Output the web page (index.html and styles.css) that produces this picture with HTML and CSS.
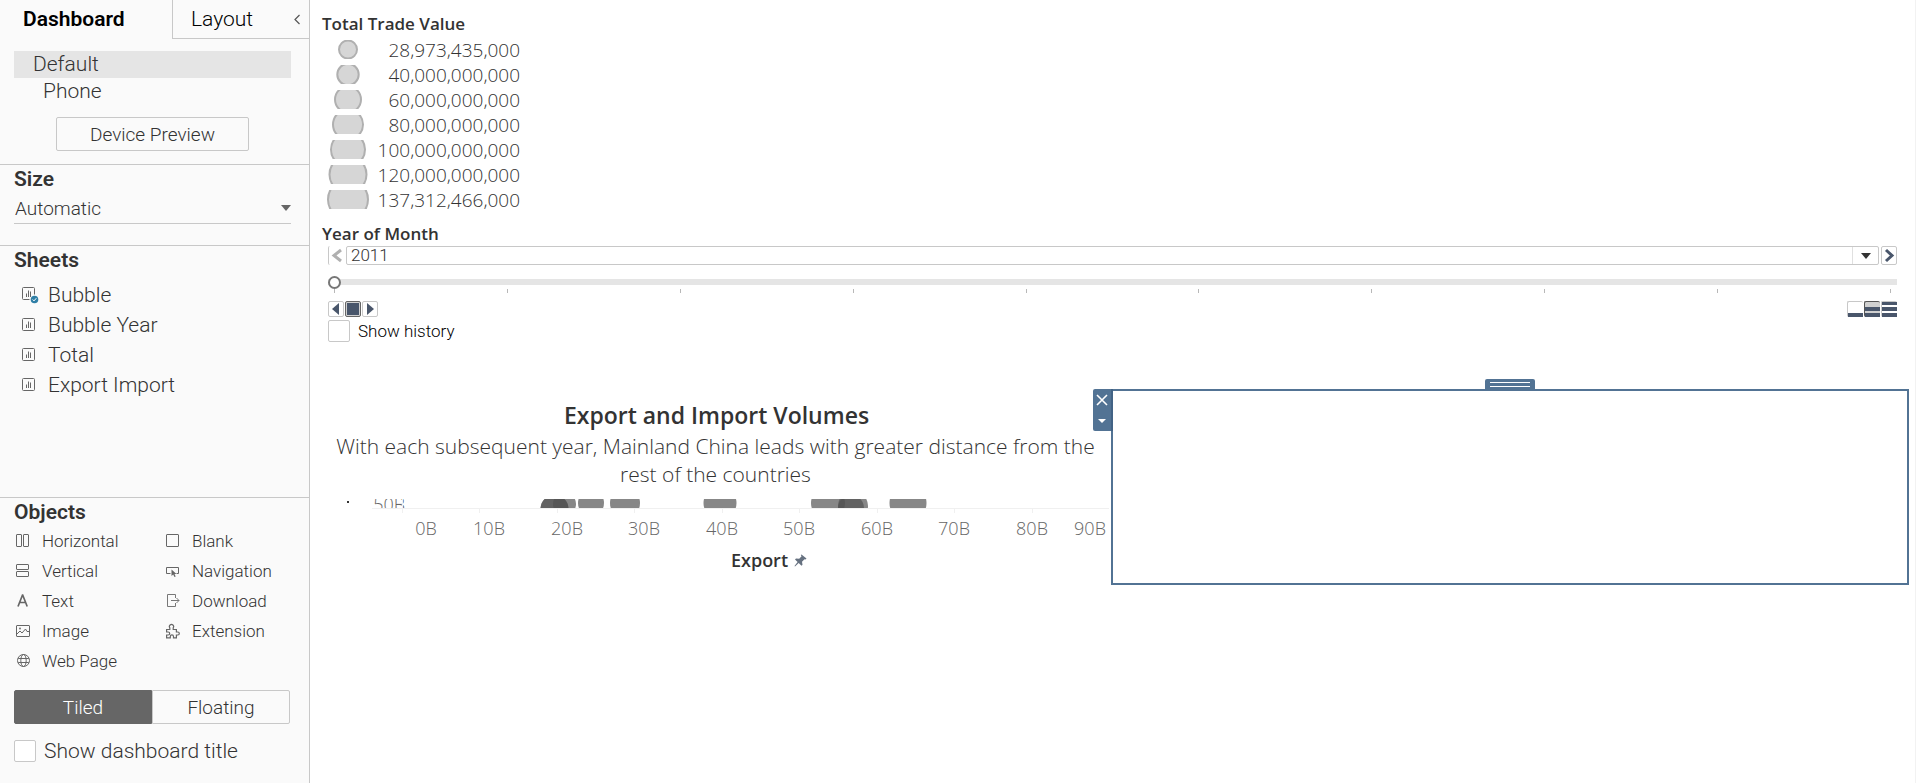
FILE: index.html
```html
<!DOCTYPE html>
<html lang="en">
<head>
<meta charset="utf-8">
<title>Dashboard</title>
<link rel="stylesheet" href="styles.css">
</head>
<body>
<div class="app">
  <aside class="sidebar">
    <div class="tabs" role="tablist">
      <button class="tab tab-active" role="tab" aria-selected="true">Dashboard</button>
      <button class="tab" role="tab" aria-selected="false">Layout</button>
      <button class="collapse" aria-label="Collapse pane"><svg width="8" height="11" viewBox="0 0 8 11"><path d="M6.500 1 2 5.500l4.500 4.500" fill="none" stroke="#555" stroke-width="1.200"/></svg></button>
    </div>
    <section class="devices">
      <button class="device device-selected">Default</button>
      <button class="device device-nested">Phone</button>
      <button class="preview">Device Preview</button>
    </section>
    <section class="section size">
      <h2 class="heading"><label for="size">Size</label></h2>
      <div class="select-wrap">
        <select id="size" class="size-select"><option>Automatic</option></select>
        <svg class="caret" width="10" height="6" viewBox="0 0 10 6"><path d="M0 0h10L5 6z" fill="#666"/></svg>
      </div>
    </section>
    <section class="section sheets">
      <h2 class="heading">Sheets</h2>
      <ul class="sheet-list">
        <li class="sheet"><svg class="sheet-icon" width="17" height="17" viewBox="0 0 17 17" fill="none" stroke="#666"><path d="M12.500 7.500v-6a1 1 0 0 0-1-1h-10a1 1 0 0 0-1 1v10a1 1 0 0 0 1 1h6M4.500 10V6.500M6.500 10V3.500M8.500 10V4.500"/><circle cx="12.500" cy="12.500" r="3.800" fill="#2f7fa6" stroke="none"/><path d="m10.700 12.500 1.300 1.400 2.300-2.700" stroke="#fff"/></svg>Bubble</li>
        <li class="sheet"><svg class="sheet-icon" width="17" height="17" viewBox="0 0 17 17" fill="none" stroke="#666"><rect x=".5" y="1.500" width="12" height="12" rx="1"/><path d="M4.500 11V7.500M6.500 11V4.500M8.500 11V5.500"/></svg>Bubble Year</li>
        <li class="sheet"><svg class="sheet-icon" width="17" height="17" viewBox="0 0 17 17" fill="none" stroke="#666"><rect x=".5" y="1.500" width="12" height="12" rx="1"/><path d="M4.500 11V7.500M6.500 11V4.500M8.500 11V5.500"/></svg>Total</li>
        <li class="sheet"><svg class="sheet-icon" width="17" height="17" viewBox="0 0 17 17" fill="none" stroke="#666"><rect x=".5" y="1.500" width="12" height="12" rx="1"/><path d="M4.500 11V7.500M6.500 11V4.500M8.500 11V5.500"/></svg>Export Import</li>
      </ul>
    </section>
    <section class="section objects">
      <h2 class="heading">Objects</h2>
      <ul class="object-grid">
        <li class="object"><svg width="16" height="16" viewBox="0 0 16 16" fill="none" stroke="#666"><rect x="1.500" y="1.500" width="5" height="12" rx=".5"/><rect x="8.500" y="1.500" width="5" height="12" rx=".5"/></svg>Horizontal</li>
        <li class="object"><svg width="16" height="16" viewBox="0 0 16 16" fill="none" stroke="#666"><rect x="1.500" y="1.500" width="12" height="12" rx=".5"/></svg>Blank</li>
        <li class="object"><svg width="16" height="16" viewBox="0 0 16 16" fill="none" stroke="#666"><rect x="1.500" y="1.500" width="12" height="5" rx=".5"/><rect x="1.500" y="8.500" width="12" height="5" rx=".5"/></svg>Vertical</li>
        <li class="object"><svg width="16" height="16" viewBox="0 0 16 16" fill="none" stroke="#666"><path d="M5.500 10.500h-4v-6h12v6h-2"/><path d="M6.500 6.500v6.500l1.700-1.500 1.300 2.500 1.200-.6-1.200-2.400h2z" fill="#666" stroke="none"/></svg>Navigation</li>
        <li class="object"><svg width="16" height="16" viewBox="0 0 16 16" fill="none" stroke="#666"><path d="M3 13.500 7.500 2h.2l4.500 11.500M4.500 9.500h6.200" stroke-width="1.700"/></svg>Text</li>
        <li class="object"><svg width="16" height="16" viewBox="0 0 16 16" fill="none" stroke="#777"><path d="M10.500 5V1.500h-8v12h8V10M6 7.500h8M11.500 5l2.500 2.500-2.500 2.500"/></svg>Download</li>
        <li class="object"><svg width="16" height="16" viewBox="0 0 16 16" fill="none" stroke="#666"><rect x="1.500" y="2.500" width="13" height="11" rx=".5"/><path d="m2 11 3-3 2 2 3.500-4L12 8.500h2"/><circle cx="5" cy="5.500" r=".9" fill="#666" stroke="none"/></svg>Image</li>
        <li class="object"><svg width="16" height="16" viewBox="0 0 16 16" fill="none" stroke="#666" stroke-width="1.200"><path d="M1.600 6.500h3.200V4.800a2.100 2.100 0 1 1 3.400 0v1.700h3.200V9h1.400a1.500 1.500 0 1 1 0 3h-1.400v2.800H8.500v-1.300a1.600 1.600 0 0 0-3.200 0v1.300H1.600V12h1.600a1.500 1.500 0 1 0 0-3H1.600z"/></svg>Extension</li>
        <li class="object"><svg width="16" height="16" viewBox="0 0 16 16" fill="none" stroke="#666"><circle cx="8.500" cy="7.500" r="6"/><ellipse cx="8.500" cy="7.500" rx="2.700" ry="6"/><path d="M3.200 5.500h10.600M3.200 9.500h10.600"/></svg>Web Page</li>
      </ul>
      <div class="toggle">
        <button class="toggle-btn toggle-on" aria-pressed="true">Tiled</button>
        <button class="toggle-btn" aria-pressed="false">Floating</button>
      </div>
      <label class="check check-title"><input type="checkbox" class="box">Show dashboard title</label>
    </section>
  </aside>

  <main class="canvas">
    <section class="legend">
      <h3 class="viz-heading">Total Trade Value</h3>
      <ul class="legend-list">
        <li class="legend-row"><svg width="52" height="19" viewBox="0 0 52 19"><circle cx="26" cy="9.500" r="9"/></svg><span>28,973,435,000</span></li>
        <li class="legend-row"><svg width="52" height="19" viewBox="0 0 52 19"><circle cx="26" cy="9.500" r="10.700"/></svg><span>40,000,000,000</span></li>
        <li class="legend-row"><svg width="52" height="19" viewBox="0 0 52 19"><circle cx="26" cy="9.500" r="13"/></svg><span>60,000,000,000</span></li>
        <li class="legend-row"><svg width="52" height="19" viewBox="0 0 52 19"><circle cx="26" cy="9.500" r="15"/></svg><span>80,000,000,000</span></li>
        <li class="legend-row"><svg width="52" height="19" viewBox="0 0 52 19"><circle cx="26" cy="9.500" r="17"/></svg><span>100,000,000,000</span></li>
        <li class="legend-row"><svg width="52" height="19" viewBox="0 0 52 19"><circle cx="26" cy="9.500" r="18.500"/></svg><span>120,000,000,000</span></li>
        <li class="legend-row"><svg width="52" height="19" viewBox="0 0 52 19"><circle cx="26" cy="9.500" r="20"/></svg><span>137,312,466,000</span></li>
      </ul>
    </section>

    <section class="pages">
      <h3 class="viz-heading"><label for="year">Year of Month</label></h3>
      <div class="pages-body">
        <div class="year-row">
          <button class="step step-prev" aria-label="Previous" disabled><svg width="12" height="15" viewBox="0 0 12 15"><path d="m10 2-7 5.500 7 5.500" fill="none" stroke="#b0b0b0" stroke-width="3"/></svg></button>
          <div class="year-box">
            <select id="year" class="year-select"><option>2011</option></select>
            <span class="year-arrow"><svg width="10" height="6" viewBox="0 0 10 6"><path d="M0 0h10L5 6z" fill="#333"/></svg></span>
          </div>
          <button class="step" aria-label="Next"><svg width="12" height="15" viewBox="0 0 12 15"><path d="m3 2 6 5.500L3 13" fill="none" stroke="#49566b" stroke-width="3"/></svg></button>
        </div>
        <input class="slider" type="range" min="0" max="9" value="0" aria-label="Year">
        <div class="ticks"><i></i><i></i><i></i><i></i><i></i><i></i><i></i><i></i><i></i><i></i></div>
        <div class="play-row">
          <div class="btn-group">
            <button class="mini" aria-label="Play backward"><svg width="14" height="14" viewBox="0 0 14 14"><path d="M10 1v12L3 7z" fill="#49566b"/></svg></button>
            <button class="mini mini-on" aria-label="Stop"><svg width="14" height="14" viewBox="0 0 14 14"><path d="M1 1h12v12H1z" fill="#49566b"/></svg></button>
            <button class="mini" aria-label="Play forward"><svg width="14" height="14" viewBox="0 0 14 14"><path d="M4 1v12l7-6z" fill="#49566b"/></svg></button>
          </div>
          <div class="btn-group">
            <button class="mini speed" aria-label="Slow"><svg width="15" height="15" viewBox="0 0 15 15"><path d="M0 11h15v4H0z" fill="#49566b"/></svg></button>
            <button class="mini speed speed-on" aria-label="Normal"><svg width="15" height="15" viewBox="0 0 15 15"><path d="M0 5h15v4H0zM0 11h15v4H0z" fill="#49566b"/></svg></button>
            <button class="mini speed" aria-label="Fast"><svg width="15" height="15" viewBox="0 0 15 15"><path d="M0 0h15v3H0zM0 5h15v4H0zM0 11h15v4H0z" fill="#49566b"/></svg></button>
          </div>
        </div>
        <label class="check check-history"><input type="checkbox" class="box">Show history</label>
      </div>
    </section>

    <div class="zones">
      <section class="chart">
        <h3 class="chart-title">Export and Import Volumes</h3>
        <p class="chart-sub">With each subsequent year, Mainland China leads with greater distance from the rest of the countries</p>
        <svg class="plot" viewBox="0 0 789 44">
          <defs><clipPath id="band"><rect x="0" y="0" width="789" height="9"/></clipPath></defs>
          <g clip-path="url(#band)">
            <rect x="25" y="2" width="2" height="2" fill="#333"/>
            <text class="tick" x="83" y="12" text-anchor="end">50B</text>
            <g class="marks">
              <circle cx="232.500" cy="10" r="14"/>
              <circle cx="232.500" cy="10" r="14"/>
              <circle cx="242.500" cy="5" r="11.500"/>
              <circle cx="269" cy="4" r="13"/>
              <circle cx="303" cy="4" r="15"/>
              <circle cx="398" cy="4" r="16.500"/>
              <circle cx="506" cy="4" r="17"/>
              <circle cx="529" cy="9" r="13"/>
              <circle cx="531" cy="7" r="15"/>
              <circle cx="586" cy="4" r="18.500"/>
            </g>
          </g>
          <path d="M50 9.500h737M80.500 0v14M75 4.500h5M157.500 10v4M235.500 10v4M312.500 10v4M400.500 10v4M477.500 10v4M555.500 10v4M632.500 10v4M710.500 10v4" fill="none" stroke="#f0f0f0"/>
          <g class="tick" text-anchor="middle">
            <text x="104" y="36">0B</text><text x="167" y="36">10B</text><text x="245" y="36">20B</text><text x="322" y="36">30B</text><text x="400" y="36">40B</text><text x="477" y="36">50B</text><text x="555" y="36">60B</text><text x="632" y="36">70B</text><text x="710" y="36">80B</text><text x="768" y="36">90B</text>
          </g>
        </svg>
        <div class="axis-title">Export<svg width="13" height="13" viewBox="0 0 13 13"><path d="m7.500.5 5 4-1 1-1-.3-2.500 2.500.5 3-1 1-2.800-2.600L1 12.500.5 12 3.600 8 1 5.400l1-1 3.200.4L7.600 2.300 6.800 1z" fill="#667180"/></svg></div>
      </section>
      <section class="selected" aria-label="Selected container">
        <div class="grip"></div>
        <div class="zone-tools">
          <button class="zone-btn" aria-label="Remove"><svg width="12" height="12" viewBox="0 0 12 12"><path d="m1 1 10 10M11 1 1 11" stroke="#fff" stroke-width="1.600"/></svg></button>
          <button class="zone-btn" aria-label="More options"><svg width="8" height="4" viewBox="0 0 8 4"><path d="M0 0h8L4 4z" fill="#fff"/></svg></button>
        </div>
      </section>
    </div>
  </main>
</div>
</body>
</html>
```
FILE: styles.css
```css
* { box-sizing: border-box; }
body { margin: 0; background: #fff; color: #333; font-family: Roboto, "Liberation Sans", sans-serif; font-weight: 300; }
button, select, input { font: inherit; color: inherit; margin: 0; padding: 0; border: 0; background: none; border-radius: 0; }
select, input { appearance: none; }
h2, h3, p, ul { margin: 0; padding: 0; }
ul { list-style: none; }
svg { display: block; flex: none; }

.app { display: flex; min-height: 100vh; }

.sidebar { display: flex; flex-direction: column; flex: none; width: 310px; background: #fafafa; border-right: 1px solid #c8c8c8; font-size: 21px; }
.tabs { display: flex; height: 39px; }
.tab { color: #000; text-align: left; padding-left: 18px; border-left: 1px solid #c8c8c8; border-bottom: 1px solid #c8c8c8; flex: 1; }
.tab-active { flex: none; width: 172px; padding: 0 0 2px 23px; border: 0; font-weight: 600; }
.collapse { width: 16px; border-bottom: 1px solid #c8c8c8; }

.devices { display: flex; flex-direction: column; padding: 12px 18px 13px 14px; }
.device { height: 27px; padding: 0 0 2px 19px; text-align: left; }
.device-selected { background: #e5e5e5; }
.device-nested { padding-left: 29px; }
.preview { align-self: center; width: 193px; height: 34px; margin-top: 12px; border: 1px solid #c8c8c8; border-radius: 2px; font-size: 19px; }

.section { border-top: 1px solid #c8c8c8; padding: 0 18px 0 14px; }
.heading { font-size: 21px; line-height: 28px; font-weight: 600; }
.size { padding-bottom: 21px; }
.select-wrap { display: flex; align-items: center; height: 31px; border-bottom: 1px solid #c8c8c8; }
.size-select { flex: 1; height: 30px; padding-left: 1px; font-size: 19px; }

.sheets { flex: 1; }
.sheet-list { padding: 6px 0 0 8px; }
.sheet { display: flex; align-items: center; gap: 9px; line-height: 30px; }

.object-grid { display: grid; grid-template-columns: 150px 1fr; font-size: 17px; }
.object { display: flex; align-items: center; gap: 11px; line-height: 30px; padding-left: 1px; }
.toggle { display: flex; height: 34px; margin: 14px 1px 16px 0; font-size: 19px; }
.toggle-btn { flex: 1; border: 1px solid #c8c8c8; border-radius: 0 2px 2px 0; }
.toggle-on { background: #666; border-color: #666; color: #fff; border-radius: 2px 0 0 2px; }
.check { display: flex; align-items: center; gap: 8px; line-height: 22px; }
.check-title { margin-bottom: 21px; }
.check-history { margin-top: 3px; font-size: 17px; color: #000; }
.box { width: 22px; height: 22px; border: 1px solid #c8c8c8; border-radius: 2px; background: #fff; }

.canvas { flex: 1; min-width: 0; padding: 12px 6px 0 12px; border-right: 1px solid #f2f2f2; font-family: "Open Sans", "Noto Sans", sans-serif; }
.viz-heading { font-size: 17px; line-height: 24px; font-weight: 600; }
.legend-list { width: 198px; padding-top: 1px; }
.legend-row { display: flex; align-items: center; justify-content: space-between; height: 25px; font-size: 19px; }
.legend-row circle { fill: #d6d6d6; stroke: #b0b0b0; stroke-width: 2px; }

.pages { padding-top: 10px; }
.pages-body { display: flex; flex-direction: column; padding: 0 12px 0 6px; font-family: Roboto, "Liberation Sans", sans-serif; }
.year-row { display: flex; gap: 2px; height: 19px; }
.step { display: flex; align-items: center; justify-content: center; width: 16px; border: 1px solid #c8c8c8; border-radius: 2px; }
.step-prev { border-width: 0 0 0 1px; }
.year-box { display: flex; flex: 1; border: 1px solid #c8c8c8; border-radius: 2px; }
.year-select { flex: 1; padding-left: 4px; font-size: 17px; line-height: 17px; }
.year-arrow { display: flex; align-items: center; justify-content: center; width: 26px; border-left: 1px solid #e0e0e0; }
.slider { height: 14px; margin-top: 10px; background: linear-gradient(#e5e5e5, #e5e5e5) center / 100% 6px no-repeat; }
.slider::-webkit-slider-thumb { appearance: none; width: 13px; height: 13px; border: 2px solid #777; border-radius: 50%; background: #fff; }
.ticks { display: flex; justify-content: space-between; padding: 0 6px; height: 4px; }
.ticks i { width: 1px; background: #b8b8b8; }
.play-row { display: flex; justify-content: space-between; margin-top: 8px; }
.btn-group { display: flex; gap: 1px; }
.mini { width: 16px; height: 16px; border: 1px solid #c8c8c8; border-radius: 2px; }
.mini-on { border-color: #666; background: #d0d0d0; }
.speed { border-width: 1px 0 0 1px; }
.speed-on { border-color: #555; background: #d0d0d0; }

.zones { display: grid; grid-template-columns: 789fr 798fr; margin-top: 47px; }
.chart { padding-top: 10px; text-align: center; }
.chart-title { font-size: 23px; line-height: 33px; font-weight: 600; }
.chart-sub { padding: 0 14px 0 12px; font-size: 21px; line-height: 28px; }
.plot { width: 100%; margin-top: 11px; }
.marks { fill: #515151; fill-opacity: .69; }
.tick { font-size: 18px; fill: #666; }
.axis-title { display: flex; align-items: center; justify-content: center; gap: 6px; margin: 5px 0 0 105px; font-size: 18px; line-height: 24px; font-weight: 600; }

.selected { position: relative; height: 196px; border: 2px solid #527394; }
.grip { position: absolute; bottom: 100%; left: 50%; width: 50px; height: 12px; margin-left: -25px; border-radius: 2px 2px 0 0; background: linear-gradient(#fff, #fff) 5px 3px / 40px 1px no-repeat, linear-gradient(#fff, #fff) 5px 7px / 40px 1px no-repeat, #527394; }
.zone-tools { position: absolute; top: -2px; right: 100%; display: flex; flex-direction: column; width: 20px; height: 42px; border-right: 2px solid #426385; border-radius: 2px 0 0 2px; background: #527394; }
.zone-btn { display: flex; flex: 1; align-items: center; justify-content: center; }
```
